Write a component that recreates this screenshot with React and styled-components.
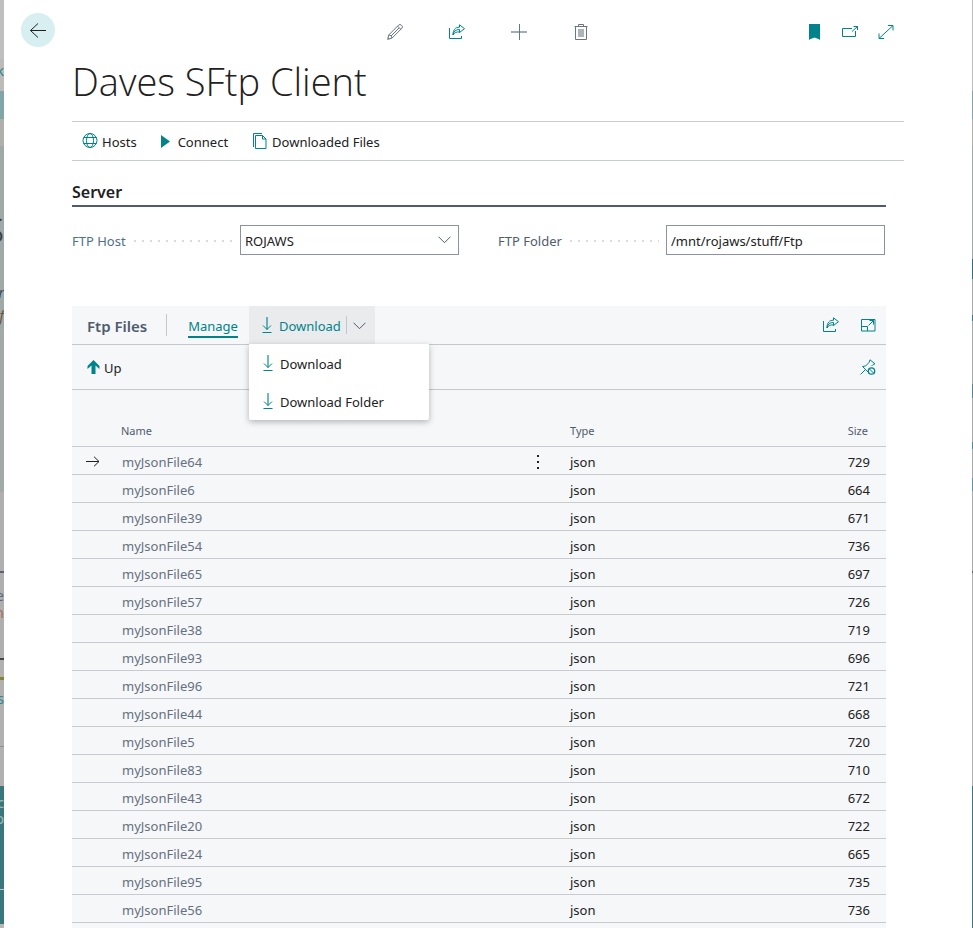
import React from "react";
import styled, { createGlobalStyle, css } from "styled-components";

const teal = "#00838a";
const slate = "#505c6d";
const ink = "#212121";
const line = "#c8ccd0";

const Global = createGlobalStyle`
  *, *::before, *::after { box-sizing: border-box; }
  body { margin: 0; background: #fff; color: ${ink}; font: 14px/20px "Noto Sans", "Open Sans", sans-serif; }
  button, input, select { font: inherit; color: inherit; }
`;

const Shell = styled.div`
  display: grid;
  grid-template-columns: 4px minmax(0, 1fr) 1px;
  height: 100vh;
  overflow: hidden;
`;

const Strip = styled.div`
  display: flex;
  flex-direction: column;
  overflow: hidden;
`;

const Band = styled.div`
  flex: none;
  display: flex;
  justify-content: flex-end;
  height: ${(p) => p.$h}px;
  overflow: hidden;
  background: ${(p) => p.$bg};
  color: ${(p) => p.$ink};
  font-size: ${(p) => p.$size || 14}px;
  font-weight: ${(p) => (p.$size ? 300 : 400)};
  line-height: ${(p) => p.$h}px;
  font-style: ${(p) => (p.$italic ? "italic" : "normal")};
`;

const Page = styled.main`
  display: flex;
  flex-direction: column;
  min-width: 0;
  padding: 0 68px;
  background: #fff;
`;

const TopBar = styled.header`
  display: grid;
  grid-template-columns: 1fr auto 1fr;
  align-items: center;
  height: 60px;
  margin: 0 -51px;
`;

const IconRow = styled.div`
  display: flex;
  justify-content: flex-end;
  gap: ${(p) => p.$gap}px;
`;

const PageActions = styled(IconRow)`
  padding-top: 4px;
`;

const WindowActions = styled(PageActions)`
  padding-right: 59px;
`;

const IconButton = styled.button`
  display: grid;
  place-items: center;
  width: 20px;
  height: 20px;
  padding: 0;
  border: 0;
  background: none;
  color: ${(p) => (p.$muted ? "#6b7482" : teal)};
`;

const BackButton = styled(IconButton)`
  width: 34px;
  height: 34px;
  border-radius: 50%;
  background: #d7eff1;
  color: ${ink};
`;

const Title = styled.h1`
  margin: 0;
  height: 61px;
  font: 300 38px/42px "Open Sans", "Noto Sans", sans-serif;
`;

const Commands = styled.nav`
  display: flex;
  align-items: center;
  gap: 24px;
  height: 40px;
  padding-left: 10px;
  border: solid ${line};
  border-width: 1px 0;
`;

const Command = styled.button`
  display: flex;
  align-items: center;
  gap: ${(p) => p.$gap || 4}px;
  padding: 0;
  border: 0;
  background: none;
  font-size: 13px;
  line-height: 20px;
  white-space: nowrap;
  svg { color: ${teal}; }
`;

const Label = styled.span`
  padding-top: 2px;
`;

const Content = styled.div`
  display: flex;
  flex: 1;
  flex-direction: column;
  margin-right: 18px;
`;

const SectionTitle = styled.h2`
  height: 46px;
  margin: 0;
  padding-top: 21px;
  border-bottom: 2px solid ${slate};
  font-size: 16px;
  line-height: 20px;
  font-weight: 600;
`;

const Fields = styled.div`
  display: grid;
  grid-template-columns: 1fr 1fr;
  column-gap: 39px;
  margin: 18px 1px 51px 0;
`;

const Field = styled.div`
  display: flex;
  align-items: center;
  min-width: 0;
`;

const Caption = styled.label`
  display: flex;
  align-items: center;
  flex: 0 0 168px;
  gap: 8px;
  padding: 2px 7px 0 0;
  color: ${(p) => (p.$link ? "#4f6f8c" : slate)};
  font-size: 13px;
  white-space: nowrap;
  &::after {
    content: "";
    flex: 1;
    height: 2px;
    background: repeating-linear-gradient(90deg, #d8dadc 0 2px, transparent 2px 8px);
  }
`;

const box = css`
  width: 100%;
  height: 30px;
  padding: 2px 4px 0;
  border: 1px solid #8a93a0;
  border-radius: 0;
  background: #fff;
  font-size: 13px;
`;

const TextBox = styled.input`
  ${box}
`;

const Picker = styled.div`
  display: grid;
  flex: 1;
  align-items: center;
  > * { grid-area: 1 / 1; }
  svg { justify-self: end; margin-right: 8px; pointer-events: none; color: ${slate}; }
`;

const Select = styled.select`
  ${box}
  appearance: none;
`;

const Panel = styled.section`
  flex: 1;
  background: #f5f7f9;
`;

const PanelBar = styled.div`
  display: flex;
  align-items: center;
  justify-content: space-between;
  height: ${(p) => p.$h}px;
  padding: 0 8px 0 15px;
  border-bottom: 1px solid #c4c8cc;
`;

const Group = styled.div`
  display: flex;
  align-items: center;
  align-self: stretch;
`;

const PanelTitle = styled.h3`
  margin: 0;
  padding: 2px 19px 0 0;
  color: ${slate};
  font-size: 15px;
  line-height: 20px;
  font-weight: 600;
  border-right: 1px solid #c4c8cc;
`;

const Tab = styled.button`
  margin: 3px 11px 0 21px;
  padding: 0;
  border: 0;
  border-bottom: 2px solid ${teal};
  background: none;
  color: ${teal};
  font-size: 13px;
  line-height: 20px;
`;

const Split = styled.div`
  position: relative;
  display: flex;
  align-items: center;
  align-self: stretch;
  width: 126px;
  padding-left: 10px;
  background: #eaebed;
`;

const SplitMain = styled(Command)`
  padding-right: 5px;
  color: ${teal};
`;

const SplitToggle = styled.button`
  display: grid;
  place-items: center;
  width: 27px;
  height: 18px;
  padding: 2px 0 0;
  border: 0;
  border-left: 1px solid #c4c8cc;
  background: none;
  color: ${slate};
`;

const Menu = styled.div`
  position: absolute;
  z-index: 1;
  top: 100%;
  left: 0;
  width: 180px;
  border-radius: 0 0 2px 2px;
  background: #fff;
  box-shadow: 0 2px 6px rgba(0, 0, 0, 0.28);
`;

const MenuItem = styled(Command)`
  width: 100%;
  height: 38px;
  padding: 0 11px;
`;

const Table = styled.table`
  width: 100%;
  border-collapse: collapse;
  table-layout: fixed;
`;

const Col = styled.col`
  width: ${(p) => p.$w};
`;

const Head = styled.th`
  height: 56px;
  padding: 0 ${(p) => (p.$right ? 18 : 0)}px 5px 0;
  border-bottom: 1px solid ${line};
  vertical-align: bottom;
  text-align: ${(p) => (p.$right ? "right" : "left")};
  color: ${slate};
  font-size: 11px;
  font-weight: 400;
`;

const Cell = styled.td`
  height: 28px;
  padding: 3px ${(p) => (p.$right ? 16 : 0)}px 0 ${(p) => p.$pad || 0}px;
  border-bottom: 1px solid ${line};
  text-align: ${(p) => (p.$right ? "right" : "left")};
  color: ${(p) => (p.$muted ? "#66707e" : ink)};
  font-size: 13px;
  line-height: 20px;
`;

const CellButton = styled(IconButton)`
  color: ${ink};
`;

const Icon = ({ children }) => (
  <svg width="16" height="16" viewBox="0 0 16 16" fill="none" stroke="currentColor" strokeWidth="1" aria-hidden="true">
    {children}
  </svg>
);
const Back = () => (
  <Icon><path d="M16 8.5H.5M8 1.5l-7.5 7L8 15.5" /></Icon>
);
const Pencil = () => (
  <Icon><path d="M.7 15.4l1.1-4.5L11.6 1.1a1.9 1.9 0 0 1 2.7 0l.5.5a1.9 1.9 0 0 1 0 2.7L5 14.1.7 15.4zM1.8 10.9c1.8.2 3 1.4 3.2 3.2M10.6 2.1l3.2 3.2M4 12l8-8M1 13.5l1.5 1.5" /></Icon>
);
const Share = () => (
  <Icon><path d="M.5 4v10.500h12v-2.500M4 11c.5-3.500 2.500-5.500 6.500-5.500V8.500L15.500 4.700 10.500.8v2.400C6 3.200 4 6 4 11zM4 11c1.500-2.500 3.500-3.300 6.500-3" /></Icon>
);
const Plus = () => (
  <Icon><path d="M0 8h16" opacity=".6" strokeWidth="2" /><path d="M8.500 0v16" /></Icon>
);
const Trash = () => (
  <Icon><path d="M1.500 2.500h13M5.500 2.500V.5h5v2M2.500 2.500v13h11v-13" /><path d="M5 5h6v8H5z" fill="currentColor" stroke="none" opacity=".55" /></Icon>
);
const Bookmark = () => (
  <Icon><path d="M3 0h11v16c-1-1-2-1.500-3-1.500L8.500 13.500 6 14.500c-1 0-2 .5-3 1.500z" fill="currentColor" stroke="none" /></Icon>
);
const PopOut = () => (
  <Icon><path d="M10 4.500H.5v8h13V7M10 7.500l5.500-5M11.500 2.500h4V6" /></Icon>
);
const Expand = () => (
  <Icon><path d="M1 14.500L15 1.500M10 1.500h5v5M1 9.500v5h5" /></Icon>
);
const Globe = () => (
  <Icon><circle cx="8" cy="7.500" r="7" /><ellipse cx="8" cy="7.500" rx="3.500" ry="7" /><path d="M1.500 4.500h13M1.500 10.500h13" /></Icon>
);
const Play = () => (
  <svg width="9" height="13" viewBox="0 0 9 13" fill="currentColor" aria-hidden="true"><path d="M0 0l9 6.500L0 13z" /></svg>
);
const Files = () => (
  <Icon><path d="M1.500 14V.5h8.500M3.500 2.500h7l3.500 3.500v9.500H3.500zM10.500 2.500v3.500H14" /></Icon>
);
const Down = () => (
  <Icon><path d="M8 0v12.500" opacity=".75" strokeWidth="1.500" /><path d="M4 8.500l4 4 4-4M3.500 15.500h9" /></Icon>
);
const Chevron = () => (
  <svg width="13" height="8" viewBox="0 0 13 8" fill="none" stroke="currentColor" aria-hidden="true"><path d="M.5.700l6 6 6-6" /></svg>
);
const Up = () => (
  <svg width="13" height="14" viewBox="0 0 13 14" fill="currentColor" aria-hidden="true"><path d="M6.500 0l6 6v3L8.500 5.500V14h-4V5.500L.5 9V6z" /></svg>
);
const Enlarge = () => (
  <Icon><path d="M1.500 2.500h13.500v11.500H1.500zM1.500 9.500h6V14M8.500 8.500l5-5M9.500 3.500h4v4" /></Icon>
);
const Unpin = () => (
  <Icon><path d="M.5 15.500l5-5M2.500 7.500l3-.5L9 3.500 10 .8l5 4-2 .8-1.500 1.500M2.500 7.500L8 13" /><circle cx="11.500" cy="12" r="3.200" strokeWidth="1.300" /><path d="M9.300 9.800l4.400 4.400" /></Icon>
);
const Right = () => (
  <svg width="14" height="12" viewBox="0 0 14 12" fill="none" stroke="currentColor" aria-hidden="true"><path d="M0 5.500h13M8 .700l5 4.800-5 4.800" /></svg>
);
const Dots = () => (
  <svg width="2" height="14" viewBox="0 0 2 14" fill="currentColor" aria-hidden="true"><path d="M0 0h2v2H0zM0 6h2v2H0zM0 12h2v2H0z" /></svg>
);

const leftBands = [
  { h: 59, bg: "#bfbfbe" },
  { h: 24, bg: "#bcbbba", text: "k", ink: "#28858f" },
  { h: 8, bg: "#bcbbba" },
  { h: 28, bg: "#82a5a8" },
  { h: 27, bg: "#b0afac" },
  { h: 60, bg: "#9fa9a8" },
  { h: 48, bg: "#9fa9a8", text: "S", ink: "#3c4042", size: 34 },
  { h: 28, bg: "#9fa9a8" },
  { h: 22, bg: "#9fa9a8", text: "r", ink: "#3b4862", italic: true },
  { h: 24, bg: "#9fa9a8", text: "f", ink: "#6c5140", italic: true },
  { h: 164, bg: "#a2a9a8" },
  { h: 79, bg: "#b0aeae" },
  { h: 2, bg: "#5e646d" },
  { h: 14, bg: "#b0aeae" },
  { h: 18, bg: "#b0aeae", text: "e", ink: "#586985", small: true },
  { h: 16, bg: "#b0aeae", text: "n", ink: "#a86b58" },
  { h: 37, bg: "#b0aeae" },
  { h: 2, bg: "#454545" },
  { h: 17, bg: "#b3b1b0" },
  { h: 3, bg: "#858338" },
  { h: 7, bg: "#b3b1b0" },
  { h: 24, bg: "#b3b1b0", text: "s", ink: "#28858f" },
  { h: 35, bg: "#b3b1b0" },
  { h: 1, bg: "#929292" },
  { h: 39, bg: "#b3b1b0" },
  { h: 8, bg: "#38787c" },
  { h: 17, bg: "#38787c", text: "c", ink: "#a4b8b9" },
  { h: 16, bg: "#38787c", text: "o", ink: "#a4b8b9" },
  { h: 62, bg: "#38787c" },
  { h: 1, bg: "#c0c8c8" },
  { h: 34, bg: "#38787c" },
  { h: 4, bg: "#bab8b7" },
];
const rightBands = [
  { h: 91, bg: "#bbb" }, { h: 28, bg: "#82a5a8" }, { h: 27, bg: "#b0afac" }, { h: 113, bg: "#9fa9a8" },
  { h: 20, bg: "#2b7378" }, { h: 36, bg: "#a8aaa9" }, { h: 6, bg: "#38787c" }, { h: 63, bg: "#a8aaa9" },
  { h: 14, bg: "#4c8b8f" }, { h: 44, bg: "#a8aaa9" }, { h: 7, bg: "#4c8b8f" }, { h: 29, bg: "#a8aaa9" },
  { h: 13, bg: "#5a9699" }, { h: 80, bg: "#a8aaa9" }, { h: 2, bg: "#5e646d" }, { h: 213, bg: "#b0aeae" },
  { h: 142, bg: "#38787c" },
];

const files = [
  ["64", 729], ["6", 664], ["39", 671], ["54", 736], ["65", 697], ["57", 726], ["38", 719], ["93", 696], ["96", 721],
  ["44", 668], ["5", 720], ["83", 710], ["43", 672], ["20", 722], ["24", 665], ["95", 735], ["56", 736],
];

const Bands = ({ items }) => (
  <Strip aria-hidden="true">
    {items.map((b, i) => (
      <Band key={i} $h={b.h} $bg={b.bg} $ink={b.ink} $size={b.size} $italic={b.italic}>{b.text}</Band>
    ))}
  </Strip>
);

export default function App() {
  return (
    <>
      <Global />
      <Shell>
        <Bands items={leftBands} />
        <Page>
          <TopBar>
            <div><BackButton aria-label="Back"><Back /></BackButton></div>
            <PageActions $gap={42}>
              <IconButton $muted aria-label="Edit"><Pencil /></IconButton>
              <IconButton aria-label="Share"><Share /></IconButton>
              <IconButton $muted aria-label="New"><Plus /></IconButton>
              <IconButton $muted aria-label="Delete"><Trash /></IconButton>
            </PageActions>
            <WindowActions $gap={16}>
              <IconButton aria-label="Bookmark"><Bookmark /></IconButton>
              <IconButton aria-label="Open in new window"><PopOut /></IconButton>
              <IconButton aria-label="Expand"><Expand /></IconButton>
            </WindowActions>
          </TopBar>
          <Title>Daves SFtp Client</Title>
          <Commands>
            <Command><Globe /><Label>Hosts</Label></Command>
            <Command $gap={8}><Play /><Label>Connect</Label></Command>
            <Command><Files /><Label>Downloaded Files</Label></Command>
          </Commands>
          <Content>
            <SectionTitle>Server</SectionTitle>
            <Fields>
              <Field>
                <Caption $link htmlFor="host">FTP Host</Caption>
                <Picker>
                  <Select id="host" defaultValue="ROJAWS"><option>ROJAWS</option></Select>
                  <Chevron />
                </Picker>
              </Field>
              <Field>
                <Caption htmlFor="folder">FTP Folder</Caption>
                <TextBox id="folder" defaultValue="/mnt/rojaws/stuff/Ftp" />
              </Field>
            </Fields>
            <Panel>
              <PanelBar $h={39}>
                <Group>
                  <PanelTitle>Ftp Files</PanelTitle>
                  <Tab>Manage</Tab>
                  <Split>
                    <SplitMain><Down /><Label>Download</Label></SplitMain>
                    <SplitToggle aria-label="More download options"><Chevron /></SplitToggle>
                    <Menu>
                      <MenuItem><Down /><Label>Download</Label></MenuItem>
                      <MenuItem><Down /><Label>Download Folder</Label></MenuItem>
                    </Menu>
                  </Split>
                </Group>
                <IconRow $gap={17}>
                  <IconButton aria-label="Share list"><Share /></IconButton>
                  <IconButton aria-label="Enlarge list"><Enlarge /></IconButton>
                </IconRow>
              </PanelBar>
              <PanelBar $h={45}>
                <Command><Up /><Label>Up</Label></Command>
                <IconButton aria-label="Unpin"><Unpin /></IconButton>
              </PanelBar>
              <Table>
                <colgroup><Col $w="49px" /><Col $w="50%" /><Col $w="42px" /><Col $w="auto" /><Col $w="auto" /></colgroup>
                <thead>
                  <tr><Head /><Head>Name</Head><Head /><Head>Type</Head><Head $right>Size</Head></tr>
                </thead>
                <tbody>
                  {files.map(([n, size], i) => (
                    <tr key={n}>
                      <Cell $pad={11}>{i === 0 && <CellButton aria-label="Current row"><Right /></CellButton>}</Cell>
                      <Cell $muted $pad={1}>{"myJsonFile" + n}</Cell>
                      <Cell>{i === 0 && <CellButton aria-label="Row options"><Dots /></CellButton>}</Cell>
                      <Cell>json</Cell>
                      <Cell $right>{size}</Cell>
                    </tr>
                  ))}
                </tbody>
              </Table>
            </Panel>
          </Content>
        </Page>
        <Bands items={rightBands} />
      </Shell>
    </>
  );
}
